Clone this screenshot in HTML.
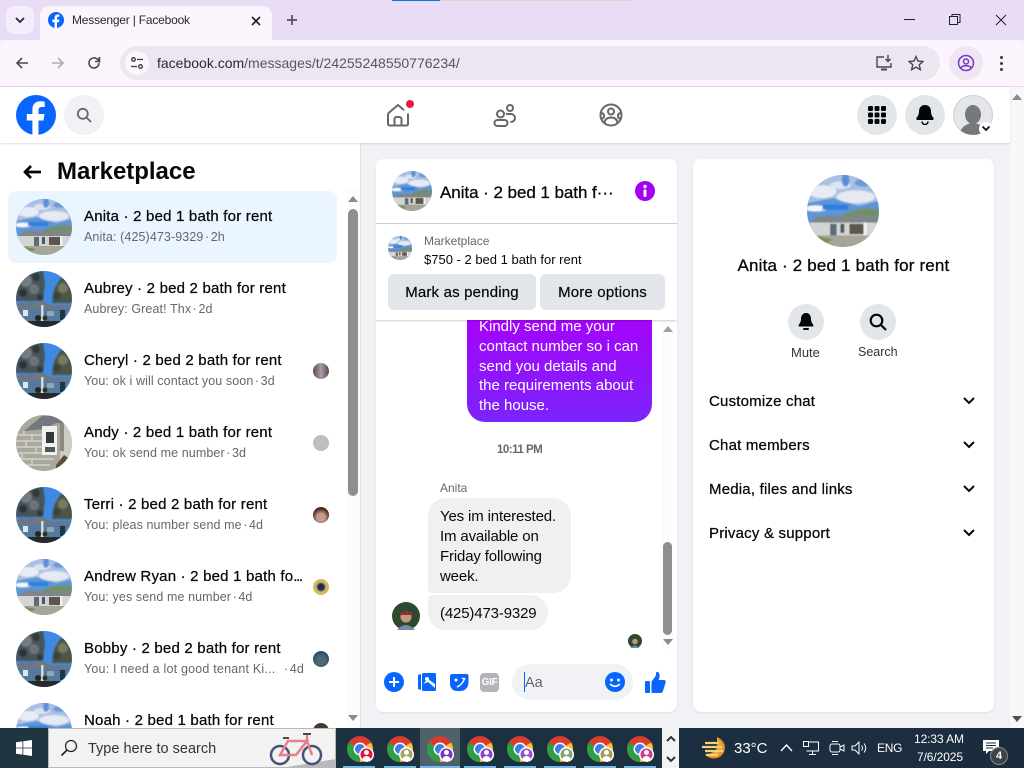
<!DOCTYPE html>
<html lang="en"><head><meta charset="utf-8"><title>Messenger | Facebook</title>
<style>
html,body{margin:0;padding:0;width:1024px;height:768px;overflow:hidden;background:#f0f2f5;font-family:"Liberation Sans",sans-serif;color:#080809}
.a{position:absolute}
.t{position:absolute;white-space:nowrap}
.ti{font-size:15px;font-weight:400;left:84px;-webkit-text-stroke:.25px #080809;letter-spacing:.2px}
.su{font-size:12.5px;color:#65676b;left:84px;letter-spacing:.1px}
.su i{font-style:normal;margin:0 1.5px}
.av{position:absolute;left:16px;width:56px;height:56px}
.sm{position:absolute;left:313px;width:16px;height:16px;border-radius:50%}
.btn{position:absolute;background:#e2e5e9;border-radius:6px;height:36px;font-size:15px;text-align:center;line-height:37px;-webkit-text-stroke:.2px #080809;letter-spacing:.18px}
.circ{position:absolute;border-radius:50%;background:#e2e5e9}
.row{font-size:15px;left:709px;-webkit-text-stroke:.25px #080809;letter-spacing:.2px}
.tb{position:absolute;top:766px;height:2px;background:#76b9ed;width:32px}
.ch{position:absolute;top:736px;width:26px;height:26px}
.bd{position:absolute;top:747px;width:15px;height:15px;border-radius:50%;overflow:hidden;box-shadow:inset 0 0 0 1.500px #fff}
.bd:before{content:"";position:absolute;left:5px;top:3px;width:5px;height:5px;border-radius:50%;background:#fff}
.bd:after{content:"";position:absolute;left:3px;top:9px;width:9px;height:5px;border-radius:5px 5px 0 0;background:#fff}
</style></head><body>
<svg width="0" height="0" style="position:absolute">
<defs>
<clipPath id="cp"><circle cx="28" cy="28" r="28"/></clipPath>
<filter id="bl"><feGaussianBlur stdDeviation=".7"/></filter>
<filter id="bs"><feGaussianBlur stdDeviation=".35"/></filter>
<symbol id="ha" viewBox="0 0 56 56"><g clip-path="url(#cp)">
<rect width="56" height="56" fill="#5f95d8"/>
<g filter="url(#bl)">
<path d="M0 0H56V20L40 24 20 18 0 22Z" fill="#a9c0e2"/>
<ellipse cx="12" cy="13" rx="11" ry="5" fill="#e8ecf4"/><ellipse cx="38" cy="17" rx="15" ry="5" fill="#e6ebf3"/><ellipse cx="26" cy="8" rx="8" ry="3" fill="#dde4f0"/><ellipse cx="44" cy="6" rx="7" ry="3" fill="#6d9ad8"/><ellipse cx="30" cy="4" rx="3" ry="5" fill="#5a8fd8"/><ellipse cx="7" cy="26" rx="9" ry="2.500" fill="#f4f6f9"/>
<rect x="12" y="23" width="20" height="4" fill="#2a80dc"/>
<path d="M26 32Q40 24 56 27V36H26Z" fill="#71906a"/>
</g>
<g filter="url(#bs)">
<path d="M2 38L8 32H56V37H2Z" fill="#80858a"/>
<rect x="2" y="37" width="52" height="11" fill="#d2d5d3"/>
<rect x="18" y="38" width="5" height="9" fill="#5c6c75"/><rect x="26" y="38" width="3" height="7" fill="#4f575c"/><rect x="33" y="38" width="12" height="8" fill="#5e564c"/><rect x="44" y="37" width="2.500" height="12" fill="#f2f2f0"/>
<rect y="47" width="56" height="9" fill="#a7a596"/><path d="M0 46L20 50 10 56H0Z" fill="#7c8f5c"/>
</g>
</g></symbol>
<symbol id="hb" viewBox="0 0 56 56"><g clip-path="url(#cp)">
<rect width="56" height="56" fill="#3f8ae2"/>
<g filter="url(#bl)">
<path d="M0 0H27L29 12 27 30H0Z" fill="#47545a"/>
<circle cx="10" cy="10" r="6" fill="#6f7c80"/><circle cx="20" cy="6" r="4" fill="#2e3a3e"/><circle cx="18" cy="18" r="5" fill="#6a7578"/><circle cx="7" cy="22" r="4" fill="#2c3639"/><circle cx="24" cy="26" r="3" fill="#30393b"/>
<path d="M56 4L44 8 38 18 36 32H56Z" fill="#4b5645"/>
<circle cx="47" cy="17" r="5" fill="#757a64"/><circle cx="41" cy="25" r="4" fill="#3b4436"/>
</g>
<g filter="url(#bs)">
<path d="M0 32L26 30 36 34H56V39H0Z" fill="#6b7885"/>
<rect y="38" width="56" height="12" fill="#52799f"/>
<rect x="7" y="39" width="5" height="6" fill="#e2e6ea"/><rect x="25" y="34" width="2.500" height="16" fill="#d3dade"/><rect x="31" y="40" width="7" height="5" fill="#8fa5b8"/><rect x="44" y="39" width="5" height="10" fill="#1b3550"/>
<circle cx="22" cy="47" r="3" fill="#20281d"/><circle cx="29" cy="47" r="2.500" fill="#2d3525"/>
<rect y="50" width="56" height="6" fill="#272c2c"/>
</g>
</g></symbol>
<symbol id="hc" viewBox="0 0 56 56"><g clip-path="url(#cp)">
<rect width="56" height="56" fill="#aaa99d"/>
<g stroke="#d4d2ca" stroke-width="1.400" filter="url(#bs)"><path d="M0 20H26M0 26H26M0 32H26M0 38H40M0 44H38M0 50H34M8 16v4M16 20v6M10 26v6M20 32v6M6 38v6M16 44v6"/></g>
<g filter="url(#bs)">
<path d="M8 16L26 1H56V8H40L28 14Z" fill="#72787c"/>
<rect x="44" y="8" width="12" height="48" fill="#cfccc0"/><rect x="44" y="8" width="4" height="28" fill="#8c8a80"/>
<rect x="26" y="11" width="15" height="29" fill="#f0f2f0"/><rect x="30" y="17" width="8" height="11" fill="#33383a"/><rect x="29" y="32" width="10" height="5" fill="#55595a"/>
<path d="M40 50L48 40 54 44 50 56H40Z" fill="#5a5040"/>
</g>
</g></symbol>
<symbol id="chrome" viewBox="0 0 25 25">
<circle cx="12.500" cy="12.500" r="12.500" fill="#db3a2f"/>
<path d="M12.500 12.500L23.300 6.250A12.500 12.500 0 0 1 12.500 25Z" fill="#f6c230"/>
<path d="M12.500 12.500L12.500 25A12.500 12.500 0 0 1 1.700 6.250Z" fill="#2f9e46"/>
<circle cx="12.500" cy="12.500" r="6.200" fill="#fff"/><circle cx="12.500" cy="12.500" r="4.800" fill="#3d7fe8"/>
</symbol>
</defs></svg>

<!-- browser chrome -->
<div class="a" style="left:0;top:0;width:1024px;height:40px;background:#e9ddf6"></div>
<div class="a" style="left:392px;top:0;width:48px;height:1px;background:#0a78d4"></div>
<div class="a" style="left:440px;top:0;width:192px;height:1px;background:#d9d9d0"></div>
<div class="a" style="left:6px;top:6px;width:28px;height:28px;border-radius:8px;background:#f4ecfb"></div>
<svg class="a" style="left:14px;top:16px" width="12" height="8"><path d="M2 2l4 4 4-4" fill="none" stroke="#2a2430" stroke-width="1.800"/></svg>
<div class="a" style="left:40px;top:6px;width:232px;height:40px;background:#fdf5fe;border-radius:10px 10px 0 0"></div>
<svg class="a" style="left:48px;top:12px" width="16" height="16" viewBox="0 0 40 40"><circle cx="20" cy="20" r="20" fill="#0866ff"/><path d="M27.500 25.500l1-6.500h-6v-3.700c0-2 .9-3.300 3.500-3.300h2.700V6.700c-1-.2-2.500-.4-4-.4-5.300 0-8.300 3-8.300 8.200V19h-5.600v6.500h5.600V40h6.100V25.500z" fill="#fff"/></svg>
<div class="t" style="left:72px;top:13px;font-size:12px;letter-spacing:-.2px;color:#2b2730">Messenger | Facebook</div>
<svg class="a" style="left:250px;top:15px" width="12" height="12"><path d="M2 2l8 8M10 2l-8 8" stroke="#26222a" stroke-width="1.700"/></svg>
<svg class="a" style="left:286px;top:14px" width="12" height="12"><path d="M6 1v10M1 6h10" stroke="#564e5e" stroke-width="1.700"/></svg>
<div class="a" style="left:0;top:40px;width:1024px;height:46px;background:#fdf5fe;border-radius:10px 10px 0 0"></div>
<div class="a" style="left:0;top:86px;width:1024px;height:1px;background:#e4dde8"></div>
<svg class="a" style="left:14px;top:55px" width="16" height="16"><path d="M14 8H3M8 3L3 8l5 5" fill="none" stroke="#4d4852" stroke-width="1.600"/></svg>
<svg class="a" style="left:50px;top:55px" width="16" height="16"><path d="M2 8h11M8 3l5 5-5 5" fill="none" stroke="#b0a9b6" stroke-width="1.600"/></svg>
<svg class="a" style="left:86px;top:55px" width="16" height="16"><path d="M13 8a5 5 0 1 1-1.500-3.600L13 6V2.500" fill="none" stroke="#4d4852" stroke-width="1.600"/><path d="M13.500 2v4.500H9" fill="none" stroke="#4d4852" stroke-width="1.600"/></svg>
<div class="a" style="left:120px;top:46px;width:820px;height:34px;border-radius:17px;background:#ede6f1"></div>
<div class="a" style="left:125px;top:51px;width:24px;height:24px;border-radius:50%;background:#fdf5fe"></div>
<svg class="a" style="left:130px;top:56px" width="14" height="14" fill="none" stroke="#3e3944" stroke-width="1.300"><circle cx="3.500" cy="3.500" r="1.800"/><path d="M7 3.500h6M1 10.500h6"/><circle cx="10.500" cy="10.500" r="1.800"/></svg>
<div class="t" style="left:157px;top:55px;font-size:14px;color:#2d2831"><span>facebook.com</span><span style="color:#5a5460">/messages/t/24255248550776234/</span></div>
<svg class="a" style="left:875px;top:54px" width="18" height="18" fill="none" stroke="#4a4550" stroke-width="1.400"><path d="M9 3H2v10h14V9"/><path d="M6 15.500h6" stroke-width="2"/><path d="M13 1v6M10.500 5L13 7.500 15.500 5"/></svg>
<svg class="a" style="left:908px;top:55px" width="16" height="16"><path d="M8 1.500l2 4.600 5 .4-3.800 3.300 1.200 4.900L8 12.100l-4.400 2.600 1.200-4.900L1 6.500l5-.4z" fill="none" stroke="#4a4550" stroke-width="1.400"/></svg>
<div class="a" style="left:949px;top:46px;width:34px;height:34px;border-radius:50%;background:#eee6f3"></div>
<svg class="a" style="left:957px;top:54px" width="18" height="18" fill="none" stroke="#7b35c1" stroke-width="1.500"><circle cx="9" cy="9" r="7.500"/><circle cx="9" cy="7.500" r="2.500"/><path d="M4 14c1-3 9-3 10 0"/></svg>
<div class="a" style="left:1000px;top:56px;width:3px;height:3px;border-radius:50%;background:#3c3742;box-shadow:0 6px 0 #3c3742,0 12px 0 #3c3742"></div>
<div class="a" style="left:904px;top:19px;width:11px;height:1px;background:#222"></div>
<svg class="a" style="left:949px;top:14px" width="12" height="12" fill="none" stroke="#222"><rect x=".5" y="2.500" width="8" height="8"/><path d="M3 2.500V.5h8v8H8.500"/></svg>
<svg class="a" style="left:995px;top:14px" width="12" height="12" stroke="#222"><path d="M1 1l10 10M11 1L1 11"/></svg>

<!-- FB header -->
<div class="a" style="left:0;top:87px;width:1010px;height:56px;background:#fff;box-shadow:0 1px 2px rgba(0,0,0,.12);z-index:3"></div>
<div style="position:absolute;left:0;top:0;z-index:4">
<svg class="a" style="left:16px;top:95px" width="40" height="40" viewBox="0 0 40 40"><circle cx="20" cy="20" r="20" fill="#0866ff"/><path d="M27.500 25.500l1-6.500h-6v-3.700c0-2 .9-3.300 3.500-3.300h2.700V6.700c-1-.2-2.500-.4-4-.4-5.300 0-8.300 3-8.300 8.200V19h-5.600v6.500h5.600V40h6.100V25.500z" fill="#fff"/></svg>
<div class="a" style="left:64px;top:95px;width:40px;height:40px;border-radius:50%;background:#f0f2f5"></div>
<svg class="a" style="left:76px;top:107px" width="16" height="16" fill="none" stroke="#65676b" stroke-width="1.800"><circle cx="6.800" cy="6.800" r="5"/><path d="M10.500 10.500L15 15"/></svg>
<svg class="a" style="left:386px;top:103px" width="24" height="24" fill="none" stroke="#65676b" stroke-width="2"><path d="M2 10.500L12 2l6 5.100M22 10.500V21a1.500 1.500 0 0 1-1.500 1.500h-17A1.500 1.500 0 0 1 2 21V10.500" stroke-linejoin="round"/><path d="M8.500 22v-6a2 2 0 0 1 2-2h3a2 2 0 0 1 2 2v6"/></svg>
<div class="a" style="left:406px;top:100px;width:8px;height:8px;border-radius:50%;background:#e41e3f"></div>
<svg class="a" style="left:493px;top:103px" width="24" height="24" fill="none" stroke="#65676b" stroke-width="2"><circle cx="7.500" cy="11" r="3.500"/><rect x="1.500" y="17" width="13" height="6" rx="3"/><circle cx="17" cy="5" r="3"/><path d="M13 11h5a4 4 0 0 1 0 8h-.5"/></svg>
<svg class="a" style="left:599px;top:103px" width="24" height="24" fill="none" stroke="#65676b" stroke-width="2"><circle cx="12" cy="12" r="10.500"/><circle cx="12" cy="8.500" r="3"/><path d="M5.500 20c.5-4 3-5.500 6.500-5.500s6 1.500 6.500 5.500M2 10c2 0 3 1 3 3s-1 3-3 2M22 10c-2 0-3 1-3 3s1 3 3 2"/></svg>
<div class="circ" style="left:857px;top:95px;width:40px;height:40px"></div>
<svg class="a" style="left:868px;top:106px" width="18" height="18" fill="#050505"><rect width="5" height="5" rx="1.200"/><rect x="6.500" width="5" height="5" rx="1.200"/><rect x="13" width="5" height="5" rx="1.200"/><rect y="6.500" width="5" height="5" rx="1.200"/><rect x="6.500" y="6.500" width="5" height="5" rx="1.200"/><rect x="13" y="6.500" width="5" height="5" rx="1.200"/><rect y="13" width="5" height="5" rx="1.200"/><rect x="6.500" y="13" width="5" height="5" rx="1.200"/><rect x="13" y="13" width="5" height="5" rx="1.200"/></svg>
<div class="circ" style="left:905px;top:95px;width:40px;height:40px"></div>
<svg class="a" style="left:916px;top:105px" width="18" height="20"><path d="M9 0c-4 0-6 3-6 6.500 0 3.500-1.500 5-2.500 6.500-.5 1 0 2 1 2h15c1 0 1.500-1 1-2-1-1.500-2.500-3-2.500-6.500C15 3 13 0 9 0z" fill="#050505"/><path d="M6 16.500a3 3 0 0 0 6 0" fill="none" stroke="#050505" stroke-width="1.500"/></svg>
<div class="a" style="left:953px;top:95px;width:40px;height:40px;border-radius:50%;background:#e4e6e9;overflow:hidden;box-shadow:inset 0 0 0 1px #ccd0d5"><div class="a" style="left:12px;top:10px;width:16px;height:19px;border-radius:50%;background:#75787d"></div><div class="a" style="left:6px;top:28px;width:28px;height:20px;border-radius:14px 14px 0 0;background:#75787d"></div></div>
<div class="a" style="left:979px;top:122px;width:14px;height:14px;border-radius:50%;background:#fff"></div>
<svg class="a" style="left:981px;top:125px" width="10" height="8"><path d="M1.500 1.500L5 5l3.500-3.500" fill="none" stroke="#111" stroke-width="1.800"/></svg>
</div>

<!-- left column -->
<div class="a" style="left:0;top:143px;width:360px;height:585px;background:#fff;border-right:1px solid #e0e2e6;overflow:hidden">
  <div class="a" style="left:346px;top:45px;width:14px;height:540px;background:#fcfcfc"></div>
  <div class="a" style="left:348px;top:66px;width:10px;height:287px;background:#8f8f8f;border-radius:5px"></div>
  <svg class="a" style="left:348px;top:53px" width="10" height="6"><path d="M5 0l5 6H0z" fill="#8a8a8a"/></svg>
  <svg class="a" style="left:348px;top:572px" width="10" height="6"><path d="M5 6L10 0H0z" fill="#8a8a8a"/></svg>
  <div class="a" style="left:8px;top:48px;width:329px;height:72px;background:#ebf5ff;border-radius:8px"></div>
</div>
<svg class="a" style="left:21px;top:163px" width="22" height="18"><path d="M20 9H4M10 3L4 9l6 6" fill="none" stroke="#050505" stroke-width="2.700"/></svg>
<div class="t" style="left:57px;top:158px;font-size:24px;font-weight:700;letter-spacing:-.02px">Marketplace</div>

<div style="position:absolute;left:0;top:0;width:346px;height:728px;overflow:hidden">
<svg class="av" style="top:199px"><use href="#ha"/></svg>
<div class="t ti" style="top:208px">Anita · 2 bed 1 bath for rent</div>
<div class="t su" style="top:230px">Anita: (425)473-9329<i>·</i>2h</div>

<svg class="av" style="top:271px"><use href="#hb"/></svg>
<div class="t ti" style="top:280px">Aubrey · 2 bed 2 bath for rent</div>
<div class="t su" style="top:302px">Aubrey: Great! Thx<i>·</i>2d</div>

<svg class="av" style="top:343px"><use href="#hb"/></svg>
<div class="t ti" style="top:352px">Cheryl · 2 bed 2 bath for rent</div>
<div class="t su" style="top:374px">You: ok i will contact you soon<i>·</i>3d</div>
<div class="sm" style="top:363px;background:linear-gradient(90deg,#5c4a44,#a99ab0 50%,#5c4a44)"></div>

<svg class="av" style="top:415px"><use href="#hc"/></svg>
<div class="t ti" style="top:424px">Andy · 2 bed 1 bath for rent</div>
<div class="t su" style="top:446px">You: ok send me number<i>·</i>3d</div>
<div class="sm" style="top:435px;background:#bcbfbf"></div>

<svg class="av" style="top:487px"><use href="#hb"/></svg>
<div class="t ti" style="top:496px">Terri · 2 bed 2 bath for rent</div>
<div class="t su" style="top:518px">You: pleas number send me<i>·</i>4d</div>
<div class="sm" style="top:507px;background:radial-gradient(circle at 50% 65%,#c99a8c 30%,#4a2a22 65%)"></div>

<svg class="av" style="top:559px"><use href="#ha"/></svg>
<div class="t ti" style="top:568px">Andrew Ryan · 2 bed 1 bath fo<span style="letter-spacing:-1.300px">...</span></div>
<div class="t su" style="top:590px">You: yes send me number<i>·</i>4d</div>
<div class="sm" style="top:579px;background:radial-gradient(circle at 50% 50%,#1d2b5c 25%,#d2b95f 45%)"></div>

<svg class="av" style="top:631px"><use href="#hb"/></svg>
<div class="t ti" style="top:640px">Bobby · 2 bed 2 bath for rent</div>
<div class="t su" style="top:662px;letter-spacing:.2px">You: I need a lot good tenant Ki...</div>
<div class="t su" style="top:662px;left:284px">·<span style="margin-left:1.500px">4d</span></div>
<div class="sm" style="top:651px;background:radial-gradient(circle at 50% 60%,#4d6a72 30%,#2a4f70 70%)"></div>

<svg class="av" style="top:703px"><use href="#ha"/></svg>
<div class="t ti" style="top:712px">Noah · 2 bed 1 bath for rent</div>
<div class="sm" style="top:723px;background:#4a3a2c"></div>
</div>

<!-- chat panel -->
<div class="a" style="left:376px;top:159px;width:301px;height:553px;background:#fff;border-radius:8px;box-shadow:0 1px 2px rgba(0,0,0,.08);overflow:hidden">
  <div class="a" style="left:91px;top:150px;width:185px;height:113px;background:linear-gradient(180deg,#a900fb,#7b24fb);border-radius:0 0 18px 18px"></div>
  <div class="t" style="left:103px;top:158px;font-size:15px;line-height:19.800px;color:#fff">Kindly send me your<br>contact number so i can<br>send you details and<br>the requirements about<br>the house.</div>
  <div class="t" style="left:121px;top:285px;font-size:11.500px;font-weight:700;color:#65676b;letter-spacing:-.5px">10:11 PM</div>
  <div class="t" style="left:64px;top:322px;font-size:12px;color:#65676b">Anita</div>
  <div class="a" style="left:52px;top:339px;width:143px;height:95px;background:#f0f0f0;border-radius:18px 18px 18px 4px"></div>
  <div class="t" style="left:64px;top:348px;font-size:15px;line-height:20px;color:#080809;letter-spacing:-.15px">Yes im interested.<br>Im available on<br>Friday following<br>week.</div>
  <div class="a" style="left:52px;top:436px;width:120px;height:35px;background:#f0f0f0;border-radius:4px 18px 18px 18px"></div>
  <div class="t" style="left:64px;top:446px;font-size:15px;letter-spacing:-.15px">(425)473-9329</div>
  <svg class="a" style="left:16px;top:443px" width="28" height="28" viewBox="0 0 28 28"><circle cx="14" cy="14" r="14" fill="#2e4a2e"/><circle cx="14" cy="15" r="5.500" fill="#c7977a"/><path d="M8 11q6-4 12 0v2H8z" fill="#8c3040"/><path d="M5 28q9-10 18 0z" fill="#6e8ca8"/></svg>
  <svg class="a" style="left:252px;top:475px" width="14" height="14" viewBox="0 0 28 28"><circle cx="14" cy="14" r="14" fill="#2e4a2e"/><circle cx="14" cy="15" r="5.500" fill="#c7977a"/><path d="M5 28q9-10 18 0z" fill="#6e8ca8"/></svg>
  <div class="a" style="left:286px;top:162px;width:11px;height:328px;background:#fcfcfc"></div>
  <svg class="a" style="left:287px;top:167px" width="10" height="6"><path d="M5 0l5 6H0z" fill="#a0a0a0"/></svg>
  <div class="a" style="left:287px;top:383px;width:9px;height:93px;background:#8f8f8f;border-radius:5px"></div>
  <svg class="a" style="left:287px;top:480px" width="10" height="6"><path d="M5 6L10 0H0z" fill="#8a8a8a"/></svg>
  <div class="a" style="left:0;top:0;width:301px;height:64px;background:#fff;border-bottom:1px solid #ccd0d5"></div>
  <svg class="a" style="left:16px;top:12px" width="40" height="40"><use href="#ha"/></svg>
  <div class="t" style="left:64px;top:24px;font-size:17px;-webkit-text-stroke:.3px #080809;letter-spacing:-.05px">Anita · 2 bed 1 bath f···</div>
  <svg class="a" style="left:259px;top:22px" width="20" height="20"><circle cx="10" cy="10" r="10" fill="#a200f5"/><circle cx="10" cy="5.500" r="1.700" fill="#fff"/><rect x="8.500" y="8.500" width="3" height="7.500" rx="1" fill="#fff"/></svg>
  <div class="a" style="left:0;top:65px;width:301px;height:96px;background:#fff;box-shadow:0 1px 2px rgba(0,0,0,.2)"></div>
  <svg class="a" style="left:12px;top:77px" width="24" height="24"><use href="#ha"/></svg>
  <div class="t" style="left:48px;top:75px;font-size:12px;color:#65676b">Marketplace</div>
  <div class="t" style="left:48px;top:93px;font-size:13px;color:#080809">$750 - 2 bed 1 bath for rent</div>
  <div class="btn" style="left:12px;top:115px;width:148px">Mark as pending</div>
  <div class="btn" style="left:164px;top:115px;width:125px">More options</div>
  <svg class="a" style="left:8px;top:513px" width="20" height="20"><circle cx="10" cy="10" r="10" fill="#0866ff"/><path d="M10 5v10M5 10h10" stroke="#fff" stroke-width="2"/></svg>
  <svg class="a" style="left:41px;top:513px" width="20" height="20"><path d="M1 3v14l3 1V2z" fill="#0866ff"/><rect x="5" y="1" width="14" height="18" rx="1.500" fill="#0866ff"/><circle cx="10" cy="7" r="2" fill="#fff"/><path d="M6 12l5-2 7 6v-4l-7-5z" fill="#fff"/></svg>
  <svg class="a" style="left:73px;top:513px" width="20" height="20"><path d="M3 2h15c1 0 1.500 1 1.500 2v6c0 6-4 9-8 9H8c-4 0-7-3-7-7V4c0-1 1-2 2-2z" fill="#0866ff"/><circle cx="7" cy="8" r="1.500" fill="#fff"/><path d="M13 6l2 1M8 15q5-2 8-9" stroke="#fff" stroke-width="1.500" fill="none"/></svg>
  <div class="a" style="left:104px;top:514px;width:19px;height:19px;border-radius:4px;background:#b3b5b9;color:#fff;font-size:10px;font-weight:700;text-align:center;line-height:19px;letter-spacing:-.3px">GIF</div>
  <div class="a" style="left:136px;top:505px;width:121px;height:36px;border-radius:18px;background:#f0f2f5"></div>
  <div class="a" style="left:148px;top:513px;width:1px;height:20px;background:#0866ff"></div>
  <div class="t" style="left:149px;top:516px;font-size:14.500px;color:#65676b">Aa</div>
  <svg class="a" style="left:229px;top:513px" width="20" height="20"><circle cx="10" cy="10" r="10" fill="#0866ff"/><circle cx="6.500" cy="8" r="1.500" fill="#fff"/><circle cx="13.500" cy="8" r="1.500" fill="#fff"/><path d="M5 12q5 4.500 10 0" stroke="#fff" stroke-width="1.600" fill="none"/></svg>
  <svg class="a" style="left:268px;top:512px" width="22" height="22"><rect x="1" y="10" width="5" height="12" rx="1" fill="#0866ff"/><path d="M7.500 10.500L11 6c1-1.500 1-3 1.200-5 2.500-.5 4 2 3.300 5l-.8 3H20c1.500 0 2 1.500 1.500 3l-2.500 8c-.4 1-1 2-2.500 2h-9z" fill="#0866ff"/></svg>
</div>

<!-- right panel -->
<div class="a" style="left:693px;top:159px;width:301px;height:553px;background:#fff;border-radius:8px;box-shadow:0 1px 2px rgba(0,0,0,.08)"></div>
<svg class="a" style="left:807px;top:175px" width="72" height="72"><use href="#ha"/></svg>
<div class="t" style="left:693px;width:301px;text-align:center;top:256px;font-size:17px;-webkit-text-stroke:.3px #080809;letter-spacing:.17px">Anita · 2 bed 1 bath for rent</div>
<div class="circ" style="left:788px;top:304px;width:36px;height:36px"></div>
<svg class="a" style="left:798px;top:313px" width="16" height="18"><path d="M8 0C4.500 0 3 3 3 6c0 3-1.500 4.500-2.300 6-.4 1 0 1.500 1 1.500h12.600c1 0 1.400-.5 1-1.500C14.500 10.500 13 9 13 6c0-3-1.500-6-5-6z" fill="#050505"/><rect x="5" y="15" width="6" height="2" rx="1" fill="#050505"/></svg>
<div class="t" style="left:791px;top:345px;font-size:13px;color:#333">Mute</div>
<div class="circ" style="left:860px;top:304px;width:36px;height:36px"></div>
<svg class="a" style="left:869px;top:313px" width="18" height="18" fill="none" stroke="#050505" stroke-width="2.200"><circle cx="7.500" cy="7.500" r="5.800"/><path d="M12 12l5 5"/></svg>
<div class="t" style="left:858px;top:345px;font-size:12.500px;color:#333">Search</div>
<div class="t row" style="top:393px">Customize chat</div>
<div class="t row" style="top:437px">Chat members</div>
<div class="t row" style="top:481px">Media, files and links</div>
<div class="t row" style="top:525px">Privacy &amp; support</div>
<svg class="a" style="left:963px;top:397px" width="12" height="8"><path d="M1 1l5 5 5-5" fill="none" stroke="#050505" stroke-width="2"/></svg>
<svg class="a" style="left:963px;top:441px" width="12" height="8"><path d="M1 1l5 5 5-5" fill="none" stroke="#050505" stroke-width="2"/></svg>
<svg class="a" style="left:963px;top:485px" width="12" height="8"><path d="M1 1l5 5 5-5" fill="none" stroke="#050505" stroke-width="2"/></svg>
<svg class="a" style="left:963px;top:529px" width="12" height="8"><path d="M1 1l5 5 5-5" fill="none" stroke="#050505" stroke-width="2"/></svg>

<!-- page scrollbar -->
<div class="a" style="left:1010px;top:87px;width:14px;height:641px;background:#f8f8fa"></div>
<svg class="a" style="left:1012px;top:94px;z-index:5" width="10" height="6"><path d="M5 0l5 6H0z" fill="#8a8a8a"/></svg>
<svg class="a" style="left:1012px;top:716px" width="10" height="6"><path d="M5 6L10 0H0z" fill="#505050"/></svg>

<!-- taskbar -->
<div class="a" style="left:0;top:728px;width:1024px;height:40px;background:linear-gradient(90deg,#1f3641,#1c3040 60%,#1b2c3e);z-index:6"></div>
<div style="position:absolute;left:0;top:0;z-index:7">
<svg class="a" style="left:16px;top:740px" width="16" height="16" fill="#fff"><path d="M0 2.300l6.500-.9v6.200H0zM7.300 1.300L16 0v7.600H7.300zM0 8.400h6.500v6.200L0 13.700zM7.300 8.400H16V16l-8.700-1.200z"/></svg>
<div class="a" style="left:48px;top:728px;width:288px;height:40px;background:#f2f2f2;box-sizing:border-box;border:1px solid #b8b8b8;overflow:hidden">
  <svg class="a" style="left:11px;top:10px" width="18" height="18" fill="none" stroke="#222" stroke-width="1.200"><circle cx="11" cy="7" r="5.500"/><path d="M7 11l-5.500 5.500" stroke-width="1.600"/></svg>
  <div class="t" style="left:39px;top:12px;font-size:14.500px;color:#333">Type here to search</div>
  <svg class="a" style="left:212px;top:2px" width="75" height="37" viewBox="0 0 75 37"><path d="M20 37L75 28V37Z" fill="#b9b9b9"/><circle cx="19" cy="24" r="9" fill="none" stroke="#4a4f78" stroke-width="2.500"/><circle cx="51" cy="24" r="9" fill="none" stroke="#4a4f78" stroke-width="2.500"/><path d="M19 24L27 10H46L35 24ZM46 10L51 24M46 4V10" fill="none" stroke="#e87d8c" stroke-width="2.500"/><path d="M22 7h6M42 3h8" stroke="#333" stroke-width="1.800"/></svg>
</div>
<div class="a" style="left:420px;top:728px;width:40px;height:40px;background:#4f616a"></div>
<svg class="ch" style="left:347px"><use href="#chrome"/></svg>
<svg class="ch" style="left:387px"><use href="#chrome"/></svg>
<svg class="ch" style="left:427px"><use href="#chrome"/></svg>
<svg class="ch" style="left:467px"><use href="#chrome"/></svg>
<svg class="ch" style="left:507px"><use href="#chrome"/></svg>
<svg class="ch" style="left:547px"><use href="#chrome"/></svg>
<svg class="ch" style="left:587px"><use href="#chrome"/></svg>
<svg class="ch" style="left:627px"><use href="#chrome"/></svg>
<div class="bd" style="left:359px;background:#e8113a"></div>
<div class="bd" style="left:399px;background:#a8a463"></div>
<div class="bd" style="left:439px;background:#7a37c4"></div>
<div class="bd" style="left:479px;background:#8a44cc"></div>
<div class="bd" style="left:519px;background:#9a52d0"></div>
<div class="bd" style="left:559px;background:#86a668"></div>
<div class="bd" style="left:599px;background:#a89a5c"></div>
<div class="bd" style="left:639px;background:#d63a8f"></div>
<div class="tb" style="left:343px"></div><div class="tb" style="left:384px"></div><div class="tb" style="left:420px;width:40px"></div><div class="tb" style="left:464px"></div><div class="tb" style="left:504px"></div><div class="tb" style="left:544px"></div><div class="tb" style="left:584px"></div><div class="tb" style="left:624px"></div>
<div class="a" style="left:662px;top:728px;width:17px;height:40px;background:#f3f3f3"></div>
<svg class="a" style="left:666px;top:735px" width="10" height="7"><path d="M1 6l4-4 4 4" fill="none" stroke="#333" stroke-width="2"/></svg>
<svg class="a" style="left:666px;top:756px" width="10" height="7"><path d="M1 1l4 4 4-4" fill="none" stroke="#333" stroke-width="2"/></svg>
<svg class="a" style="left:702px;top:736px" width="26" height="24"><path d="M15 1a11 11 0 1 1-12 17h6a7 7 0 0 0 6-17z" fill="#ee8f22"/><path d="M15 1c6 3 8 10 4 15-3 4-10 5-16 2 7 0 12-3 12-8 0-4 0-6 0-9z" fill="#f0a030"/><path d="M3 7h14M0 11h20M3 15h18M4 19h12" stroke="#f4d27a" stroke-width="2.200"/></svg>
<div class="t" style="left:734px;top:740px;font-size:15px;color:#fff">33°C</div>
<svg class="a" style="left:780px;top:743px" width="13" height="9"><path d="M1 8l5.500-6L12 8" fill="none" stroke="#fff" stroke-width="1.300"/></svg>
<svg class="a" style="left:803px;top:741px" width="16" height="14" fill="none" stroke="#fff"><path d="M3.500 1H15.500V10H3.500M9.500 10v3M6 13.500h7"/><rect x=".5" y=".5" width="5" height="5" fill="#1b2f3f"/></svg>
<svg class="a" style="left:829px;top:740px" width="16" height="16" fill="none" stroke="#fff"><rect x="1" y="4" width="10" height="8" rx="2"/><path d="M11 7l4-2v6l-4-2M3 1.500h6M3 14.500h6"/></svg>
<svg class="a" style="left:851px;top:741px" width="16" height="14" fill="none" stroke="#fff"><path d="M1 5h3l4-4v12L4 9H1zM10.500 4.500q2 2.500 0 5M13 2.500q3.500 4.500 0 9"/></svg>
<div class="t" style="left:877px;top:741px;font-size:12px;letter-spacing:-.3px;color:#fff">ENG</div>
<div class="t" style="left:914px;top:732px;font-size:12px;letter-spacing:-.1px;color:#fff">12:33 AM</div>
<div class="t" style="left:917px;top:750px;font-size:12px;letter-spacing:-.1px;color:#fff">7/6/2025</div>
<svg class="a" style="left:983px;top:740px" width="17" height="15"><path d="M0 0h16v11H6l-3 3v-3H0z" fill="#fff"/><path d="M3 3h10M3 5.500h10M3 8h7" stroke="#1b2f3f"/></svg>
<div class="a" style="left:990px;top:747px;width:16px;height:16px;border-radius:50%;background:#3d4448;border:1px solid #888;color:#fff;font-size:11px;font-weight:700;text-align:center;line-height:16px">4</div>
</div>
</body></html>
